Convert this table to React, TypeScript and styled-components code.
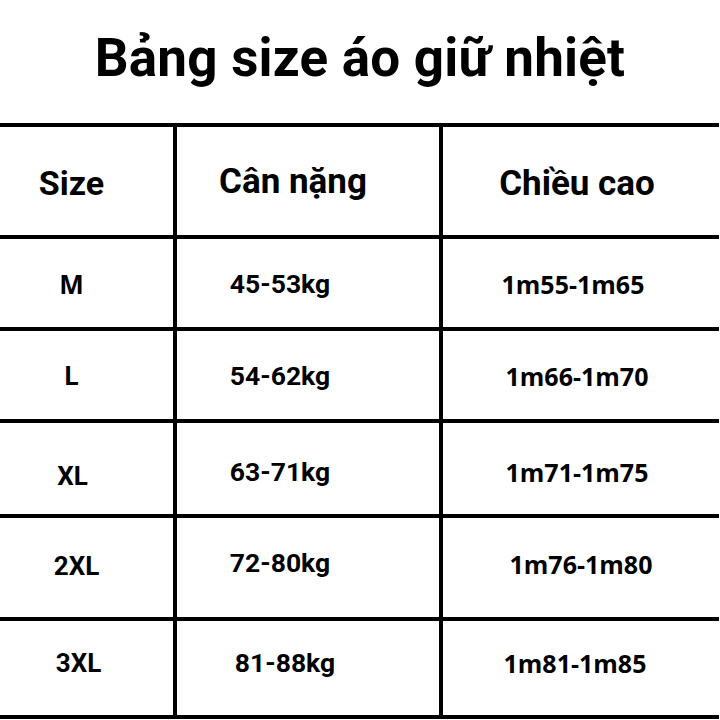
import React from 'react';
import styled, { createGlobalStyle } from 'styled-components';

const GlobalStyle = createGlobalStyle`
  html, body {
    margin: 0;
    padding: 0;
    background: #ffffff;
  }
  body {
    font-family: Roboto, "Noto Sans", Arial, sans-serif;
    color: #000;
  }
`;

const Page = styled.div`
  width: 720px;
  height: 720px;
  background: #fff;
  overflow: hidden;
`;

const Title = styled.h1`
  margin: 0;
  height: 123px;
  display: flex;
  align-items: center;
  justify-content: center;
  padding-bottom: 8px;
  box-sizing: border-box;
  font-family: Roboto, sans-serif;
  font-weight: 700;
  font-size: 53px;
  letter-spacing: 0.2px;
  color: #000;
`;

const Table = styled.div`
  display: flex;
  flex-direction: column;
  width: 719px;
`;

const Row = styled.div<{ $h: number }>`
  display: grid;
  grid-template-columns: 173px 266px 1fr;
  height: ${({ $h }) => $h}px;
  border-top: 4px solid #000;
  box-sizing: border-box;
`;

const LastLine = styled.div`
  height: 4px;
  background: #000;
`;

const Cell = styled.div<{ $line?: boolean }>`
  display: flex;
  align-items: center;
  justify-content: center;
  border-left: ${({ $line }) => ($line ? '4px solid #000' : 'none')};
  min-width: 0;
`;

const Text = styled.span<{ $font: 'roboto' | 'open'; $size: number; $dx: number; $dy: number }>`
  display: inline-block;
  font-family: ${({ $font }) => ($font === 'open' ? '"Open Sans", "Noto Sans", sans-serif' : 'Roboto, sans-serif')};
  font-weight: 700;
  font-size: ${({ $size }) => $size}px;
  line-height: 1;
  white-space: nowrap;
  transform: translate(${({ $dx }) => $dx}px, ${({ $dy }) => $dy}px);
`;

type CellData = { t: string; dx: number; dy: number };
type RowData = { h: number; cells: [CellData, CellData, CellData] };

const rows: RowData[] = [
  { h: 92, cells: [{ t: 'M', dx: -15, dy: 1 }, { t: '45-53kg', dx: -28, dy: 1 }, { t: '1m55-1m65', dx: -8, dy: 1 }] },
  { h: 92, cells: [{ t: 'L', dx: -15, dy: 1 }, { t: '54-62kg', dx: -28, dy: 1 }, { t: '1m66-1m70', dx: -4, dy: 1 }] },
  { h: 95, cells: [{ t: 'XL', dx: -14, dy: 7 }, { t: '63-71kg', dx: -28, dy: 4 }, { t: '1m71-1m75', dx: -4, dy: 4 }] },
  { h: 103, cells: [{ t: '2XL', dx: -10, dy: -2 }, { t: '72-80kg', dx: -28, dy: -4 }, { t: '1m76-1m80', dx: 0, dy: -3 }] },
  { h: 98, cells: [{ t: '3XL', dx: -8, dy: -5 }, { t: '81-88kg', dx: -23, dy: -5 }, { t: '1m81-1m85', dx: -6, dy: -5 }] },
];

export default function App() {
  return (
    <Page>
      <GlobalStyle />
      <Title>Bảng size áo giữ nhiệt</Title>
      <Table>
        <Row $h={112}>
          <Cell>
            <Text $font="roboto" $size={34} $dx={-15} $dy={2}>Size</Text>
          </Cell>
          <Cell $line>
            <Text $font="roboto" $size={35} $dx={-15} $dy={0}>Cân nặng</Text>
          </Cell>
          <Cell $line>
            <Text $font="roboto" $size={35} $dx={-4} $dy={2}>Chiều cao</Text>
          </Cell>
        </Row>
        {rows.map((r, i) => (
          <Row key={i} $h={r.h}>
            <Cell>
              <Text $font={r.cells[0].t === 'M' ? 'open' : 'roboto'} $size={26} $dx={r.cells[0].dx} $dy={r.cells[0].dy}>
                {r.cells[0].t}
              </Text>
            </Cell>
            <Cell $line>
              <Text $font="roboto" $size={26.5} $dx={r.cells[1].dx} $dy={r.cells[1].dy}>
                {r.cells[1].t}
              </Text>
            </Cell>
            <Cell $line>
              <Text $font="open" $size={25} $dx={r.cells[2].dx} $dy={r.cells[2].dy}>
                {r.cells[2].t}
              </Text>
            </Cell>
          </Row>
        ))}
        <LastLine />
      </Table>
    </Page>
  );
}
